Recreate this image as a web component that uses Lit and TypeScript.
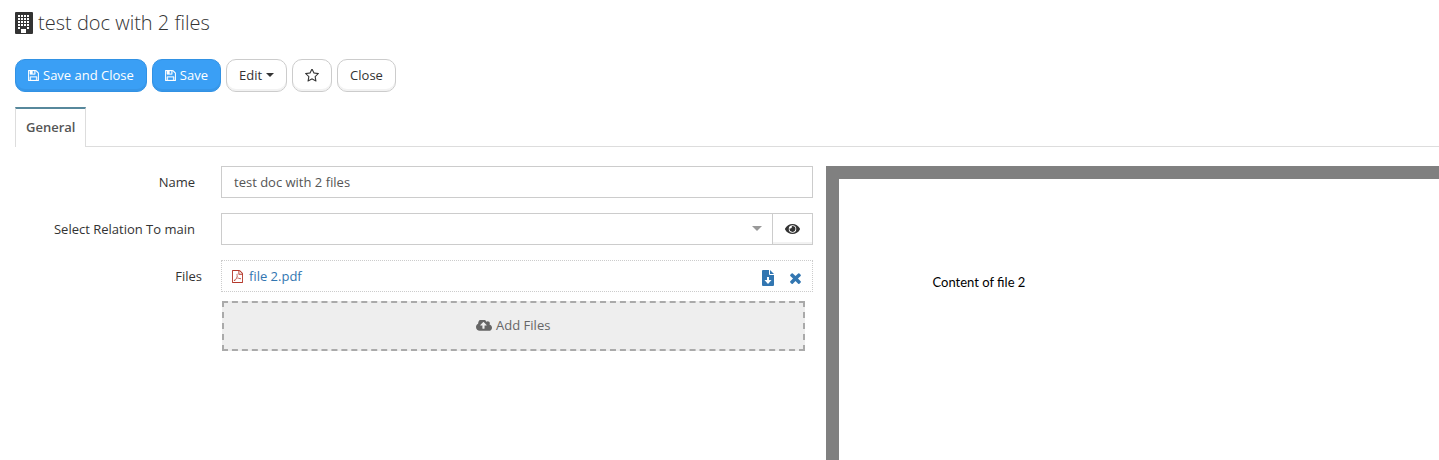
import { LitElement, html, css, svg } from "lit";
import { customElement, property, state } from "lit/decorators.js";

const icons: Record<string, { box: string; shape: unknown }> = {
  building: {
    box: "0 0 18 22",
    shape: svg`<path fill-rule="evenodd" d="M0 1q0-1 1-1h16q1 0 1 1v20q0 1-1 1h-16q-1 0-1-1zM3 3v2h2v-2zM6 3v2h2v-2zM9 3v2h2v-2zM12 3v2h2v-2zM3 6v2h2v-2zM6 6v2h2v-2zM9 6v2h2v-2zM12 6v2h2v-2zM3 9v2h2v-2zM6 9v2h2v-2zM9 9v2h2v-2zM12 9v2h2v-2zM3 12v2h2v-2zM6 12v2h2v-2zM9 12v2h2v-2zM12 12v2h2v-2zM3 15v2h2v-2zM12 15v2h2v-2zM6 17v4h5v-4z"/>`,
  },
  save: {
    box: "128 128 1536 1536",
    shape: svg`<path stroke="currentColor" stroke-width="40" d="M512 1536h768v-384h-768v384zm896 0h128v-896q0-14-10-38.500t-20-34.500l-281-281q-10-10-34-20t-39-10v416q0 40-28 68t-68 28h-576q-40 0-68-28t-28-68v-416h-128v1280h128v-416q0-40 28-68t68-28h832q40 0 68 28t28 68v416zm-384-928v-320q0-13-9.500-22.500t-22.500-9.500h-192q-13 0-22.500 9.500t-9.500 22.500v320q0 13 9.500 22.500t22.500 9.500h192q13 0 22.500-9.500t9.500-22.500zm640 32v928q0 40-28 68t-68 28h-1344q-40 0-68-28t-28-68v-1344q0-40 28-68t68-28h928q40 0 88 20t76 48l280 280q28 28 48 76t20 88z"/>`,
  },
  star: {
    box: "64 128 1664 1536",
    shape: svg`<path d="M1201 1004l306-297-422-62-189-382-189 382-422 62 306 297-73 421 378-199 377 199zm527-357q0 22-26 48l-363 354 86 500q1 7 1 20 0 50-41 50-19 0-40-12l-449-236-449 236q-22 12-40 12-21 0-31.500-14.500t-10.500-35.500q0-6 2-20l86-500-364-354q-25-27-25-48 0-37 56-46l502-73 225-455q19-41 49-41t49 41l225 455 502 73q56 9 56 46z"/>`,
  },
  caret: { box: "0 0 8 4", shape: svg`<path d="M0 0h8l-4 4z"/>` },
  eye: {
    box: "0 64 576 384",
    shape: svg`<path d="M288 144a110.940 110.940 0 0 0-31.240 5 55.400 55.400 0 0 1 7.240 27 56 56 0 0 1-56 56 55.400 55.400 0 0 1-27-7.240A111.710 111.710 0 1 0 288 144zm284.520 97.400C518.290 135.590 410.930 64 288 64S57.680 135.640 3.480 241.410a32.350 32.350 0 0 0 0 29.190C57.710 376.410 165.070 448 288 448s230.320-71.640 284.520-177.410a32.350 32.350 0 0 0 0-29.190zM288 400a144 144 0 1 1 144-144 143.930 143.930 0 0 1-144 144z"/>`,
  },
  pdf: {
    box: "128 0 1536 1792",
    shape: svg`<path d="M1596 380q28 28 48 76t20 88v1152q0 40-28 68t-68 28h-1344q-40 0-68-28t-28-68v-1600q0-40 28-68t68-28h896q40 0 88 20t76 48zm-444-244v376h376q-10-29-22-41l-313-313q-12-12-41-22zm384 1528v-1024h-416q-40 0-68-28t-28-68v-416h-768v1536h1280zm-514-593q33 26 84 56 59-7 117-7 147 0 177 49 16 22 2 52 0 1-1 2l-2 2v1q-6 38-71 38-48 0-115-20t-130-53q-221 24-392 83-153 262-242 262-15 0-28-7l-24-12q-1-1-6-5-10-10-6-36 9-40 56-91.500t132-96.500q14-9 23 6 2 2 2 4 52-85 107-197 68-136 104-262-24-82-30.500-159.500t6.500-127.500q11-40 42-40h22q23 0 35 15 18 21 9 68-2 6-4 8 1 3 1 8v30q-2 123-14 192 55 164 146 238zm-576 411q52-24 137-158-51 40-87.500 84t-49.500 74zm398-920q-15 42-2 132 1-7 7-44 0-3 7-43 1-4 4-8-1-1-1-2-1-2-1-3-1-22-13-36 0 1-1 2v2zm-124 661q135-54 284-81-2-1-13-9.500t-16-13.500q-76-67-127-176-27 86-83 197-30 56-45 83zm646-16q-24-24-140-24 76 28 124 28 14 0 18-1 0-1-2-3z"/>`,
  },
  download: {
    box: "0 0 12 16",
    shape: svg`<path fill-rule="evenodd" d="M0 1q0-1 1-1h6v4q0 1 1 1h4v10q0 1-1 1h-10q-1 0-1-1zM5 7v3h-2.500l3.500 4 3.500-4h-2.500v-3z"/><path d="M8 0l4 4h-4z"/>`,
  },
  times: {
    box: "302 238 1188 1316",
    shape: svg`<path d="M1490 1322q0 40-28 68l-136 136q-28 28-68 28t-68-28l-294-294-294 294q-28 28-68 28t-68-28l-136-136q-28-28-28-68t28-68l294-294-294-294q-28-28-28-68t28-68l136-136q28-28 68-28t68 28l294 294 294-294q28-28 68-28t68 28l136 136q28 28 28 68t-28 68l-294 294 294 294q28 28 28 68z"/>`,
  },
  upload: {
    box: "-64 256 1920 1280",
    shape: svg`<path d="M1216 864q0-14-9-23l-352-352q-9-9-23-9t-23 9l-351 351q-10 12-10 24 0 14 9 23t23 9h224v352q0 13 9.500 22.500t22.500 9.500h192q13 0 22.500-9.500t9.500-22.500v-352h224q13 0 22.500-9.500t9.500-22.500zm640 288q0 159-112.500 271.500t-271.500 112.500h-1088q-185 0-316.500-131.500t-131.500-316.500q0-130 70-240t188-165q-2-30-2-43 0-212 150-362t362-150q156 0 285.500 87t188.500 231q71-62 166-62 106 0 181 75t75 181q0 76-41 138 130 31 213.500 135.500t83.500 238.500z"/>`,
  },
};

@customElement("ui-icon")
export class UiIcon extends LitElement {
  @property() name = "save";

  static styles = css`
    :host { display: inline-flex; flex: none; }
    .glyph { display: block; width: 100%; height: 100%; fill: currentColor; }
  `;

  render() {
    const icon = icons[this.name];
    return html`<svg class="glyph" viewBox=${icon.box} aria-hidden="true">${icon.shape}</svg>`;
  }
}

@customElement("app-root")
export class AppRoot extends LitElement {
  @state() private docName = "test doc with 2 files";
  @state() private files = ["file 2.pdf"];

  static styles = css`
    :host {
      display: flex;
      flex-direction: column;
      min-height: 100vh;
      box-sizing: border-box;
      padding-left: 15px;
      background: #fff;
      color: #333;
      font: 13px/18px "Open Sans", sans-serif;
    }
    *, *::before { box-sizing: border-box; }
    button, input, select { font: inherit; color: inherit; margin: 0; }
    button { cursor: pointer; }
    a { color: #3276b1; text-decoration: none; }

    .title {
      display: flex;
      align-items: center;
      gap: 5px;
      margin: 0;
      padding: 8px 0 21px;
      font-size: 20px;
      line-height: 30px;
      font-weight: 300;
    }
    .toolbar { display: flex; gap: 5px; }
    .btn {
      display: flex;
      align-items: center;
      gap: 4px;
      height: 33px;
      padding: 0 12px 1px;
      border: 1px solid #ccc;
      border-radius: 10px;
      background: #fff;
      box-shadow: inset 0 -2px 0 rgba(0, 0, 0, 0.05);
    }
    .primary { background: #3a9ff5; border-color: #3292e4; color: #fff; }

    .tabs { display: flex; margin-top: 15px; border-bottom: 1px solid #ddd; }
    .tab {
      height: 40px;
      margin-bottom: -1px;
      padding: 0 10px 2px;
      border: 1px solid #ddd;
      border-top: 2px solid #57889c;
      border-bottom: 0;
      background: #fff;
      color: #555;
      font-weight: 600;
    }

    .content {
      flex: 1;
      display: grid;
      grid-template-columns: 13fr 10fr;
      gap: 13px;
      padding-top: 19px;
    }
    .form { display: flex; flex-direction: column; gap: 15px; }
    .row { display: grid; grid-template-columns: 180px 1fr; gap: 26px; }
    .row.wide { grid-template-columns: 187px 1fr; gap: 19px; }
    .label { padding-top: 7px; text-align: right; }
    .text {
      width: 100%;
      height: 32px;
      padding: 0 12px;
      border: 1px solid #ccc;
      border-radius: 0;
      background: #fff;
      color: #555;
    }
    .group { display: flex; }
    .picker { position: relative; flex: 1; }
    .picker .text { display: block; border-right: 0; appearance: none; }
    .arrow { position: absolute; right: 10px; top: 13px; width: 10px; height: 5px; color: #999; }
    .addon {
      display: flex;
      align-items: center;
      justify-content: center;
      width: 41px;
      height: 32px;
      padding: 0;
      border: 1px solid #ccc;
      background: #fff;
      box-shadow: inset 0 -2px 0 rgba(0, 0, 0, 0.05);
    }
    .files { display: flex; flex-direction: column; gap: 9px; }
    .file {
      display: flex;
      align-items: center;
      height: 32px;
      padding: 0 11px 0 10px;
      border: 1px dotted #ccc;
    }
    .filename { display: flex; flex: 1; align-items: center; gap: 6px; }
    .action {
      display: flex;
      align-items: center;
      padding: 3px 0 0;
      margin-left: 16px;
      border: 0;
      background: none;
      color: #3276b1;
    }
    .drop {
      display: flex;
      align-items: center;
      justify-content: center;
      gap: 4px;
      height: 50px;
      margin: 0 8px 0 1px;
      padding: 0 0 2px;
      border: 2px dashed #aaa;
      background: #eee;
      color: #666;
    }

    .preview { display: flex; padding: 13px 0 0 13px; background: gray; }
    .page {
      flex: 1;
      padding: 94px 94px 0;
      background: #fff;
      color: #000;
      font-family: Lato, sans-serif;
    }
    .line { margin: 0; }

    .i-building { width: 18px; height: 22px; }
    .i-save { width: 11px; height: 11px; }
    .i-star { width: 14px; height: 13px; }
    .i-caret { width: 8px; height: 4px; }
    .i-eye { width: 15px; height: 10px; }
    .i-pdf { width: 11px; height: 13px; color: #b5392b; }
    .i-download { width: 12px; height: 16px; }
    .i-times { width: 11px; height: 12px; }
    .i-upload { width: 16px; height: 11px; }
  `;

  private icon(name: string) {
    return html`<ui-icon class="i-${name}" name=${name}></ui-icon>`;
  }

  private onName(e: Event) {
    this.docName = (e.target as HTMLInputElement).value;
  }

  private removeFile(file: string) {
    this.files = this.files.filter((f) => f !== file);
  }

  render() {
    return html`
      <h1 class="title">${this.icon("building")}<span>${this.docName}</span></h1>
      <div class="toolbar">
        <button class="btn primary">${this.icon("save")}<span>Save and Close</span></button>
        <button class="btn primary">${this.icon("save")}<span>Save</span></button>
        <button class="btn"><span>Edit</span>${this.icon("caret")}</button>
        <button class="btn" aria-label="Favourite">${this.icon("star")}</button>
        <button class="btn">Close</button>
      </div>
      <div class="tabs" role="tablist">
        <button class="tab" role="tab" aria-selected="true">General</button>
      </div>
      <div class="content">
        <div class="form">
          <div class="row">
            <label class="label" for="name">Name</label>
            <input class="text" id="name" .value=${this.docName} @input=${this.onName} />
          </div>
          <div class="row">
            <label class="label" for="relation">Select Relation To main</label>
            <div class="group">
              <div class="picker">
                <select class="text" id="relation"><option></option></select>
                <ui-icon class="arrow" name="caret"></ui-icon>
              </div>
              <button class="addon" aria-label="View">${this.icon("eye")}</button>
            </div>
          </div>
          <div class="row wide">
            <label class="label" for="add">Files</label>
            <div class="files">
              ${this.files.map(
                (file) => html`
                  <div class="file">
                    <a class="filename" href="#">${this.icon("pdf")}<span>${file}</span></a>
                    <a class="action" href="#" aria-label="Download">${this.icon("download")}</a>
                    <button class="action" aria-label="Remove" @click=${() => this.removeFile(file)}>
                      ${this.icon("times")}
                    </button>
                  </div>
                `
              )}
              <button class="drop" id="add">${this.icon("upload")}<span>Add Files</span></button>
            </div>
          </div>
        </div>
        <section class="preview" aria-label="Preview">
          <div class="page"><p class="line">Content of file 2</p></div>
        </section>
      </div>
    `;
  }
}
